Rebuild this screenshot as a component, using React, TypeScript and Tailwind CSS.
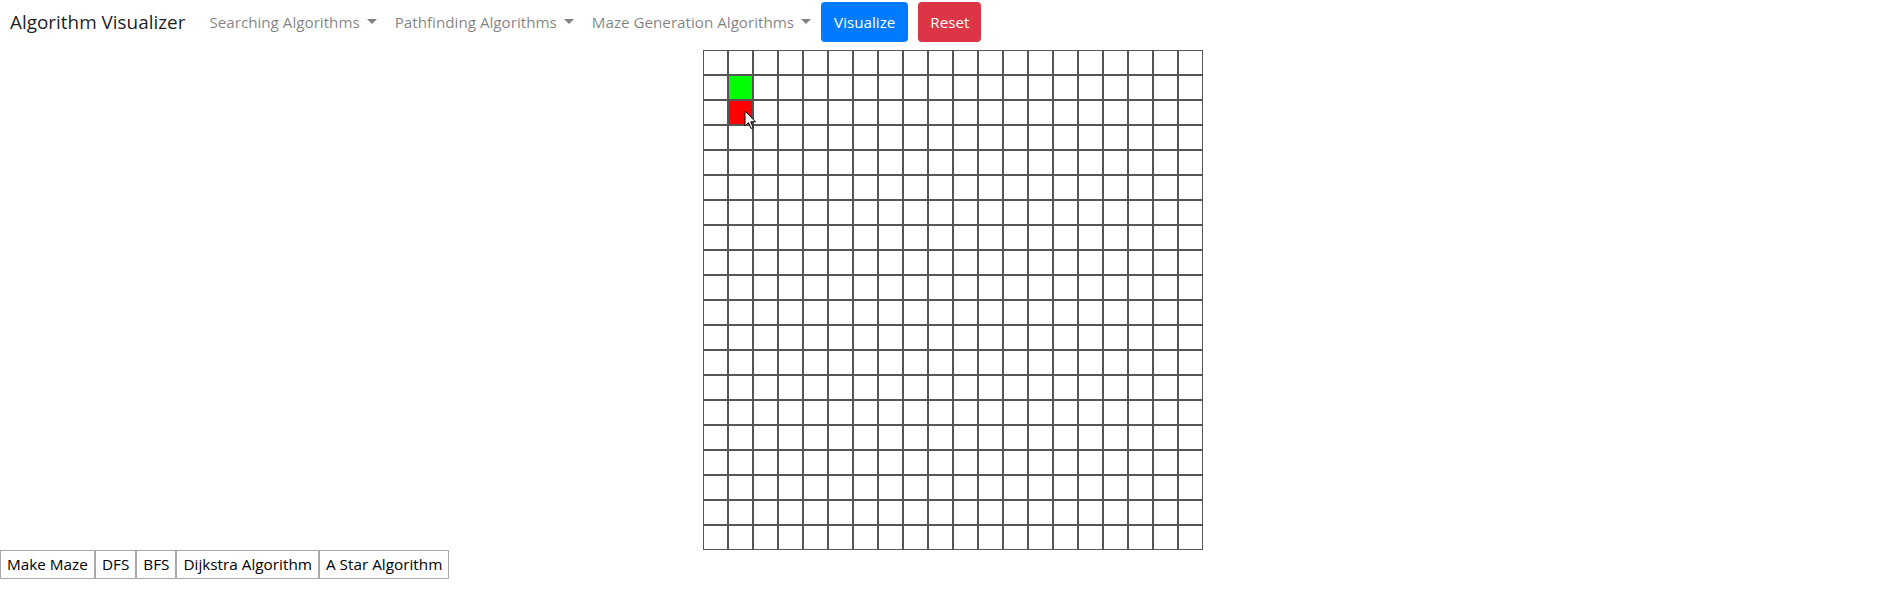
import React from 'react'

const ROWS = 20
const COLS = 20
const START = { row: 1, col: 1 }
const END = { row: 2, col: 1 }

const NavDropdown: React.FC<{ label: string }> = ({ label }) => (
  <span className="flex items-center pl-2 pr-[10px] text-[rgba(0,0,0,0.5)] text-[15.2px] whitespace-nowrap">
    {label}
    <span className="ml-[7px] inline-block w-0 h-0 border-t-[5px] border-t-[#808080] border-x-[5px] border-x-transparent" />
  </span>
)

const Cursor = () => (
  <svg width="13" height="20" viewBox="0 0 13 20" className="absolute left-[41px] top-[60px] pointer-events-none">
    <path d="M1 1 L1 16 L4.5 12.5 L7 18.5 L9.2 17.6 L6.8 11.8 L11.5 11.8 Z" fill="#fff" stroke="#000" strokeWidth="1" strokeLinejoin="round" />
  </svg>
)

export default function App() {
  const cells = Array.from({ length: ROWS * COLS }, (_, i) => {
    const row = Math.floor(i / COLS)
    const col = i % COLS
    let bg = 'bg-white'
    if (row === START.row && col === START.col) bg = 'bg-[#00ff00]'
    if (row === END.row && col === END.col) bg = 'bg-[#ff0000]'
    return <div key={i} className={`w-[25px] h-[25px] border border-[#555] ${bg}`} />
  })

  return (
    <div className="bg-white min-h-[592px] font-['Open_Sans',sans-serif] text-[#212529]">
      <nav className="flex items-center h-[44px] pl-[10px]">
        <span className="text-[18.9px] text-[rgba(0,0,0,0.9)] mr-4 whitespace-nowrap">Algorithm Visualizer</span>
        <NavDropdown label="Searching Algorithms" />
        <NavDropdown label="Pathfinding Algorithms" />
        <NavDropdown label="Maze Generation Algorithms" />
        <button className="h-[40px] px-[13px] rounded-[4px] bg-[#007bff] text-white text-[15.2px]">Visualize</button>
        <button className="ml-[10px] h-[40px] px-[12px] rounded-[4px] bg-[#dc3545] text-white text-[15.2px]">Reset</button>
      </nav>

      <div className="mt-[6px] ml-[703px] relative w-fit">
        <div className="grid grid-cols-[repeat(20,25px)]">{cells}</div>
        <Cursor />
      </div>

      <div className="flex">
        {['Make Maze', 'DFS', 'BFS', 'Dijkstra Algorithm', 'A Star Algorithm'].map(label => (
          <button key={label} className="h-[29px] px-[6px] border border-[#a9a9a9] bg-white text-[15.3px] text-black whitespace-nowrap">
            {label}
          </button>
        ))}
      </div>
    </div>
  )
}
